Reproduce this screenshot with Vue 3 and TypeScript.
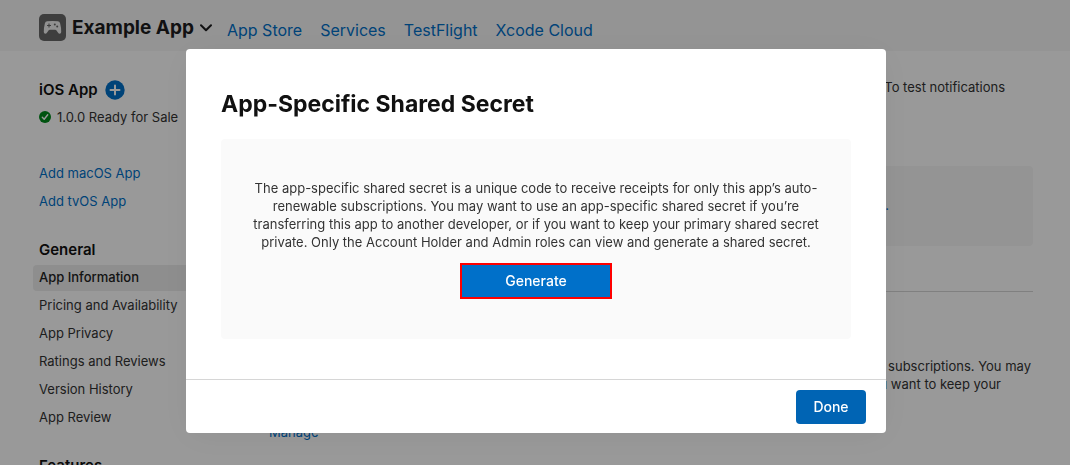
<script setup lang="ts">
interface NavLink {
  label: string
  current?: boolean
}

const tabs: string[] = ['App Store', 'Services', 'TestFlight', 'Xcode Cloud']
const platforms: string[] = ['Add macOS App', 'Add tvOS App']
const general: NavLink[] = [
  { label: 'App Information', current: true },
  { label: 'Pricing and Availability' },
  { label: 'App Privacy' },
  { label: 'Ratings and Reviews' },
  { label: 'Version History' },
  { label: 'App Review' },
]
</script>

<template>
  <div class="page">
    <header class="topbar">
      <button class="app-switch" type="button">
        <svg class="app-icon" viewBox="0 0 27 27" aria-hidden="true">
          <rect width="27" height="27" rx="5" fill="#686868" />
          <path
            d="M8.2 7.2 Q13.5 6.6 18.8 7.2 Q20.6 7.4 21.1 9.2 Q22.3 13.8 22.2 18 Q22.1 19.8 20.7 19.8 Q19.7 19.7 18.9 18.5 L17.3 16.2 Q16.9 15.7 16.2 15.7 H10.8 Q10.1 15.7 9.7 16.2 L8.1 18.5 Q7.3 19.7 6.3 19.8 Q4.9 19.8 4.8 18 Q4.7 13.8 5.9 9.2 Q6.4 7.4 8.2 7.2 Z"
            fill="#f2f2f2"
          />
          <path d="M10 9.5 V13.5 M8 11.5 H12" stroke="#686868" stroke-width="1.1" />
          <circle cx="15.8" cy="10.5" r="1" fill="#686868" />
          <circle cx="18.2" cy="12.6" r="1" fill="#686868" />
        </svg>
        <span>Example App</span>
        <svg class="chevron" viewBox="0 0 12 8" aria-hidden="true">
          <path d="M1 1.2 L6 6.3 L11 1.2" fill="none" stroke="#1d1d1f" stroke-width="2" stroke-linecap="round" stroke-linejoin="round" />
        </svg>
      </button>
      <nav class="tabs">
        <a v-for="tab in tabs" :key="tab" href="#">{{ tab }}</a>
      </nav>
    </header>

    <div class="columns">
      <aside class="sidebar">
        <div class="platform">
          <h2>iOS App</h2>
          <button class="add" type="button" aria-label="Add version">
            <svg viewBox="0 0 20 20" aria-hidden="true">
              <circle cx="10" cy="10" r="9.7" fill="#0070c9" />
              <path d="M10 5.5 V14.5 M5.5 10 H14.5" stroke="#fff" stroke-width="2" stroke-linecap="round" />
            </svg>
          </button>
        </div>
        <a class="status" href="#">
          <svg viewBox="0 0 12 12" aria-hidden="true">
            <circle cx="6" cy="6" r="6" fill="#008a1c" />
            <path d="M3.3 6.3 L5.2 8.3 L8.7 3.8" fill="none" stroke="#fff" stroke-width="1.4" stroke-linecap="round" stroke-linejoin="round" />
          </svg>
          <span>1.0.0 Ready for Sale</span>
        </a>
        <nav class="platform-links">
          <a v-for="name in platforms" :key="name" href="#">{{ name }}</a>
        </nav>
        <h2>General</h2>
        <nav class="section-links">
          <a v-for="item in general" :key="item.label" href="#" :class="{ current: item.current }">{{ item.label }}</a>
        </nav>
        <h2>Features</h2>
      </aside>

      <main class="content">
        <p class="intro">To test notifications</p>
        <section class="card"><a href="#">.</a></section>
        <section class="secret">
          <p>subscriptions. You may</p>
          <p class="short">you want to keep your</p>
          <a href="#">Manage</a>
        </section>
      </main>
    </div>

    <div class="overlay">
      <section class="dialog" role="dialog" aria-modal="true" aria-labelledby="dialog-title">
        <div class="dialog-body">
          <h1 id="dialog-title">App-Specific Shared Secret</h1>
          <div class="panel">
            <p>
              The app-specific shared secret is a unique code to receive receipts for only this app’s auto-<br />
              renewable subscriptions. You may want to use an app-specific shared secret if you’re<br />
              transferring this app to another developer, or if you want to keep your primary shared secret<br />
              private. Only the Account Holder and Admin roles can view and generate a shared secret.
            </p>
            <button class="generate" type="button">Generate</button>
          </div>
        </div>
        <footer class="dialog-footer">
          <button class="done" type="button">Done</button>
        </footer>
      </section>
    </div>
  </div>
</template>

<style>
body {
  margin: 0;
  overflow: hidden;
}
</style>

<style scoped>
* {
  box-sizing: border-box;
}

.page {
  height: 100vh;
  overflow: hidden;
  background: #fff;
  color: #333;
  font-family: Inter, "Liberation Sans", sans-serif;
  font-size: 13px;
  line-height: 18px;
}

h1,
h2,
p {
  margin: 0;
}

a {
  color: #0070c9;
  text-decoration: none;
}

button {
  padding: 0;
  border: 0;
  background: none;
  font-family: inherit;
}

.topbar {
  display: flex;
  align-items: center;
  gap: 15px;
  height: 51px;
  padding: 4px 39px 0;
  background: #f7f7f7;
}

.app-switch {
  display: flex;
  align-items: center;
  gap: 6px;
  color: #1d1d1f;
  font-size: 19px;
  font-weight: 700;
  line-height: 28px;
  white-space: nowrap;
}

.app-icon {
  width: 27px;
  height: 27px;
}

.chevron {
  width: 12px;
  height: 8px;
}

.tabs {
  display: flex;
  gap: 18px;
  padding-top: 4px;
  font-size: 16px;
  font-weight: 400;
  line-height: 20px;
  white-space: nowrap;
}

.columns {
  display: flex;
}

.sidebar {
  flex: 0 0 230px;
  padding: 28px 0 0 33px;
}

.sidebar h2 {
  padding-left: 6px;
  color: #111;
  font-size: 15px;
  font-weight: 600;
  line-height: 22px;
}

.platform {
  display: flex;
  align-items: center;
  gap: 7px;
}

.add,
.add svg {
  display: block;
  width: 20px;
  height: 20px;
}

.status {
  display: flex;
  align-items: center;
  gap: 6px;
  padding: 7px 0 0 6px;
  color: #333;
}

.status svg {
  width: 12px;
  height: 12px;
}

.platform-links {
  display: flex;
  flex-direction: column;
  gap: 10px;
  padding: 38px 0 29px 6px;
}

.section-links {
  display: flex;
  flex-direction: column;
  gap: 2px;
  padding: 4px 0 24px;
}

.section-links a {
  padding: 3px 6px 5px;
  border-radius: 4px;
  color: #333;
}

.section-links .current {
  background: #ededed;
  color: #222;
  font-weight: 500;
}

.content {
  flex: 1;
  padding: 27px 37px 0 39px;
  text-align: right;
}

.intro {
  padding-right: 28px;
}

.card {
  height: 80px;
  margin-top: 70px;
  padding: 30px 144px;
  border-radius: 4px;
  background: #f7f7f7;
}

.secret {
  margin-top: 45px;
  padding: 65px 2px 0 0;
  border-top: 1px solid #d6d6d6;
}

.secret .short {
  padding-right: 30px;
}

.secret a {
  display: block;
  padding-top: 30px;
  text-align: left;
}

.overlay {
  position: fixed;
  inset: 0;
  display: flex;
  align-items: flex-start;
  justify-content: center;
  padding: 49px 0 0 2px;
  background: rgba(0, 0, 0, 0.4);
}

.dialog {
  width: 700px;
  border-radius: 4px;
  background: #fff;
  box-shadow: 0 4px 36px rgba(0, 0, 0, 0.05);
}

.dialog-body {
  padding: 40px 35px;
}

h1 {
  color: #111;
  font-size: 23px;
  font-weight: 700;
  line-height: 30px;
}

.panel {
  display: flex;
  flex-direction: column;
  align-items: center;
  gap: 12px;
  margin-top: 20px;
  padding: 40px 20px;
  border-radius: 4px;
  background: #fafafa;
  text-align: center;
}

.generate {
  width: 152px;
  height: 36px;
  padding-bottom: 2px;
  border: 2px solid #f00;
  background: #0070c9;
  color: #fff;
  font-size: 14px;
  font-weight: 500;
}

.dialog-footer {
  display: flex;
  justify-content: flex-end;
  padding: 10px 20px 9px;
  border-top: 1px solid #d6d6d6;
}

.done {
  width: 70px;
  height: 34px;
  padding-bottom: 2px;
  border-radius: 4px;
  background: #0064b4;
  color: #fff;
  font-size: 14px;
  font-weight: 500;
}
</style>
